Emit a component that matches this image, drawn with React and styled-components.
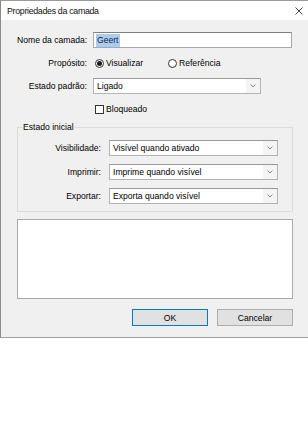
import styled, { createGlobalStyle } from 'styled-components';

const GlobalStyle = createGlobalStyle`
  html, body {
    margin: 0;
    padding: 0;
    background: #ffffff;
    overflow: hidden;
  }
  * {
    box-sizing: border-box;
  }
`;

const Window = styled.div`
  width: 100%;
  background: #f0f0f0;
  border-top: 1px solid #9a9a9a;
  border-left: 1px solid #8a8a8a;
  border-bottom: 1px solid #a0a0a0;
  box-shadow: 0 2px 4px rgba(0, 0, 0, 0.18);
  font-family: "Liberation Sans", Arial, sans-serif;
  font-size: 8.6px;
  color: #000;
`;

const TitleBar = styled.div`
  height: 19px;
  background: #ffffff;
  display: flex;
  align-items: center;
  justify-content: space-between;
  padding: 0 4px 0 6px;
`;

const Title = styled.span`
  font-size: 8.8px;
  letter-spacing: -0.3px;
  color: #111;
`;

const CloseIcon = styled.svg`
  width: 8px;
  height: 8px;
  margin-right: 1px;
`;

const Body = styled.div`
  padding: 12px 15px 11px 16px;
`;

const TopForm = styled.div`
  display: grid;
  grid-template-columns: 70px 1fr;
  grid-auto-rows: 16px;
  column-gap: 6px;
  row-gap: 7px;
  align-items: center;
`;

const Label = styled.label`
  text-align: right;
  white-space: nowrap;
  line-height: 16px;
`;

const TextInput = styled.div`
  width: 199px;
  height: 16px;
  background: #fff;
  border: 1px solid #a8a8a8;
  border-top-color: #7f7f7f;
  display: flex;
  align-items: center;
  padding-left: 2px;
`;

const Selected = styled.span`
  background: #a9cdef;
  color: #0f2547;
  line-height: 13px;
  padding: 0 1px;
`;

const Combo = styled.div`
  width: ${({ width }) => width};
  height: 16px;
  background: #fff;
  border: 1px solid #b4b4b4;
  border-top-color: #9a9a9a;
  display: flex;
  align-items: stretch;
`;

const ComboText = styled.span`
  flex: 1;
  line-height: 14px;
  padding-left: 3px;
  white-space: nowrap;
  overflow: hidden;
`;

const ComboButton = styled.span`
  width: 14px;
  background: #f4f4f4;
  display: flex;
  align-items: center;
  justify-content: center;
`;

const RadioRow = styled.div`
  display: flex;
  align-items: center;
  padding-left: 2px;
`;

const RadioOption = styled.span`
  display: flex;
  align-items: center;
  gap: 2px;
  width: ${({ width }) => width || 'auto'};
`;

const RadioCircle = styled.span`
  width: 9px;
  height: 9px;
  border-radius: 50%;
  border: 1px solid #333;
  background: #fff;
  display: flex;
  align-items: center;
  justify-content: center;

  &::after {
    content: '';
    width: 5px;
    height: 5px;
    border-radius: 50%;
    background: ${({ checked }) => (checked ? '#1a1a1a' : 'transparent')};
  }
`;

const CheckRow = styled.div`
  grid-column: 2;
  display: flex;
  align-items: center;
  gap: 2px;
  padding-left: 2px;
`;

const CheckBox = styled.span`
  width: 9px;
  height: 9px;
  border: 1px solid #333;
  background: #fff;
`;

const Group = styled.fieldset`
  margin: 5px 0 0;
  padding: 8px 14px 7px 0;
  border: 1px solid #dcdcdc;
  min-width: 0;
`;

const Legend = styled.legend`
  margin-left: 4px;
  padding: 0 1px;
  line-height: 10px;
`;

const GroupForm = styled.div`
  display: grid;
  grid-template-columns: 83px 1fr;
  grid-auto-rows: 16px;
  column-gap: 8px;
  row-gap: 8px;
  align-items: center;
`;

const ListBox = styled.div`
  margin-top: 7px;
  height: 80px;
  background: #fff;
  border: 1px solid #a9a9a9;
`;

const ButtonRow = styled.div`
  margin-top: 10px;
  display: flex;
  justify-content: flex-end;
  gap: 9px;
`;

const Button = styled.button`
  width: 76px;
  height: 17px;
  padding: 0;
  font-family: inherit;
  font-size: 8.6px;
  color: #000;
  background: #e1e1e1;
  border: 1px solid ${({ primary }) => (primary ? '#0078d7' : '#adadad')};
`;

function Chevron() {
  return (
    <svg width="6" height="4" viewBox="0 0 6 4">
      <path d="M0.5 0.5 L3 3 L5.5 0.5" fill="none" stroke="#777" strokeWidth="0.9" />
    </svg>
  );
}

function ComboBox({ value, width }) {
  return (
    <Combo width={width}>
      <ComboText>{value}</ComboText>
      <ComboButton>
        <Chevron />
      </ComboButton>
    </Combo>
  );
}

export default function App() {
  return (
    <>
      <GlobalStyle />
      <Window>
        <TitleBar>
          <Title>Propriedades da camada</Title>
          <CloseIcon viewBox="0 0 8 8">
            <path d="M0.5 0.5 L7.5 7.5 M7.5 0.5 L0.5 7.5" stroke="#333" strokeWidth="0.9" />
          </CloseIcon>
        </TitleBar>
        <Body>
          <TopForm>
            <Label>Nome da camada:</Label>
            <TextInput>
              <Selected>Geert</Selected>
            </TextInput>

            <Label>Propósito:</Label>
            <RadioRow>
              <RadioOption width="73px">
                <RadioCircle checked />
                Visualizar
              </RadioOption>
              <RadioOption>
                <RadioCircle />
                Referência
              </RadioOption>
            </RadioRow>

            <Label>Estado padrão:</Label>
            <ComboBox value="Ligado" width="168px" />

            <CheckRow>
              <CheckBox />
              Bloqueado
            </CheckRow>
          </TopForm>

          <Group>
            <Legend>Estado inicial</Legend>
            <GroupForm>
              <Label>Visibilidade:</Label>
              <ComboBox value="Visível quando ativado" width="100%" />
              <Label>Imprimir:</Label>
              <ComboBox value="Imprime quando visível" width="100%" />
              <Label>Exportar:</Label>
              <ComboBox value="Exporta quando visível" width="100%" />
            </GroupForm>
          </Group>

          <ListBox />

          <ButtonRow>
            <Button primary>OK</Button>
            <Button>Cancelar</Button>
          </ButtonRow>
        </Body>
      </Window>
    </>
  );
}
